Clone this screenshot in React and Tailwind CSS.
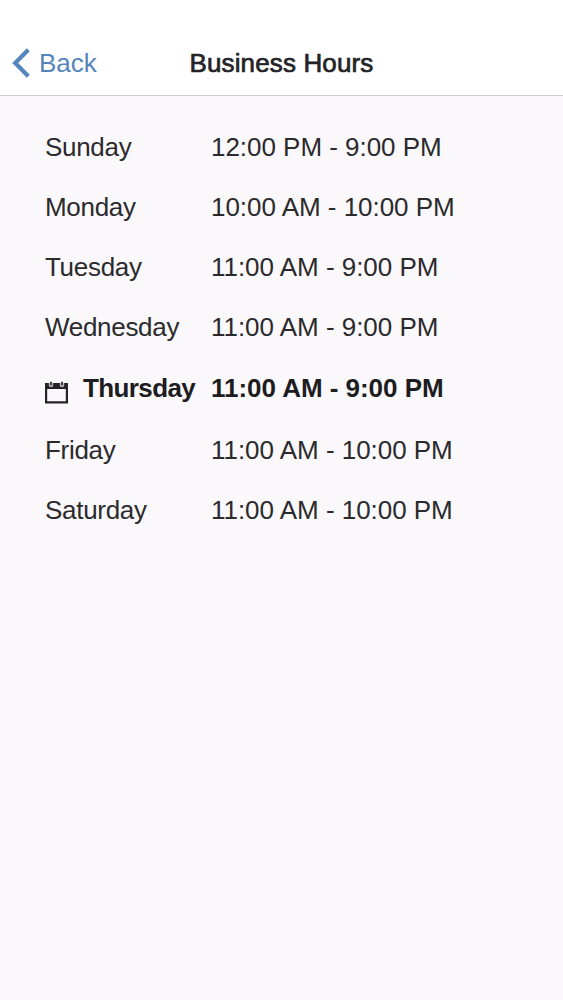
import React from 'react';

const hours = [
  { day: 'Sunday', time: '12:00 PM - 9:00 PM' },
  { day: 'Monday', time: '10:00 AM - 10:00 PM' },
  { day: 'Tuesday', time: '11:00 AM - 9:00 PM' },
  { day: 'Wednesday', time: '11:00 AM - 9:00 PM' },
  { day: 'Thursday', time: '11:00 AM - 9:00 PM', today: true },
  { day: 'Friday', time: '11:00 AM - 10:00 PM' },
  { day: 'Saturday', time: '11:00 AM - 10:00 PM' },
];

const BackIcon = () => (
  <svg width="18" height="30" viewBox="0 0 18 30" fill="none" className="shrink-0">
    <path d="M16.3 1.8L3.2 15l13.1 13.2" stroke="#5585bd" strokeWidth="4.2" />
  </svg>
);

const CalendarIcon = () => (
  <svg width="23" height="24" viewBox="0 0 23 24" fill="none" className="mt-2 mr-[15px] shrink-0">
    <path d="M0 3h23v20.5H0z M2.2 9v12.3h18.6V9z" fill="#242326" fillRule="evenodd" />
    <path d="M3.8 3h4.4v2.4a1.6 1.6 0 0 1-1.6 1.6H5.4a1.6 1.6 0 0 1-1.6-1.6zM14.8 3h4.4v2.4a1.6 1.6 0 0 1-1.6 1.6h-1.2a1.6 1.6 0 0 1-1.6-1.6z" fill="#b5b3b8" />
    <path d="M6 1.8v3.4M17 1.8v3.4" stroke="#454448" strokeWidth="2" />
  </svg>
);

const HoursRow = ({ day, time, today }) => (
  <li className={today ? 'flex h-[63px] items-center pb-0.5 font-bold text-[#1d1c1f]' : 'flex h-15 items-center'}>
    <div className="flex w-[166px] shrink-0 items-center">
      {today && <CalendarIcon />}
      <span className={today ? 'tracking-[-0.6px]' : 'tracking-[-0.3px]'}>{day}</span>
    </div>
    <span className="tracking-[-0.03px]">{time}</span>
  </li>
);

const App = () => {
  return (
    <div className="min-h-screen bg-[#faf8fb] font-['Liberation_Sans',Arial,sans-serif] text-[26px] leading-[30px] whitespace-nowrap text-[#2b2a2d]">
      <header className="grid h-24 grid-cols-[1fr_auto_1fr] items-center border-b border-[#cfcdd0] bg-white pt-[30px]">
        <button className="flex items-center gap-[9px] pl-3 text-[#5585bd]">
          <BackIcon />
          <span>Back</span>
        </button>
        <h1 className="tracking-[0.14px] text-[#242326] [-webkit-text-stroke:0.7px_#242326]">Business Hours</h1>
      </header>
      <ul className="pt-[21px] pl-[45px]">
        {hours.map((row) => (
          <HoursRow key={row.day} {...row} />
        ))}
      </ul>
    </div>
  );
};

export default App;
